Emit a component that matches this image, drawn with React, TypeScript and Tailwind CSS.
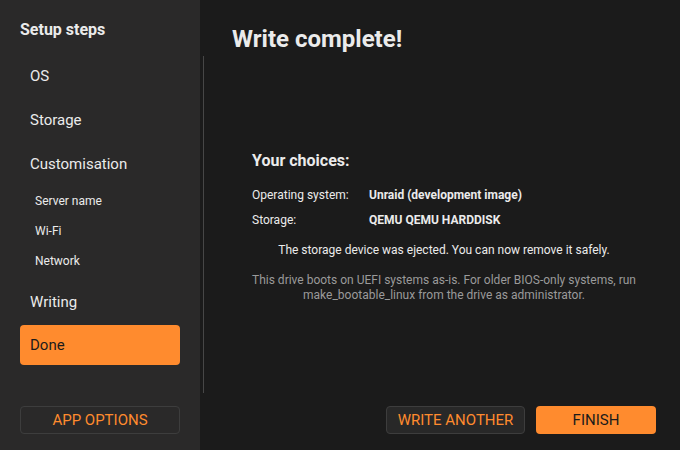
import React from 'react';

const font = { fontFamily: 'Roboto, "Liberation Sans", sans-serif' };

const steps = [
  { label: 'OS', sub: false },
  { label: 'Storage', sub: false },
  { label: 'Customisation', sub: false },
  { label: 'Server name', sub: true },
  { label: 'Wi-Fi', sub: true },
  { label: 'Network', sub: true },
];

export default function App() {
  return (
    <div className="flex w-[680px] h-[450px] bg-[#1b1b1b] text-[#ebebeb] overflow-hidden" style={font}>
      {/* Sidebar */}
      <aside className="w-[200px] shrink-0 bg-[#2a2929] flex flex-col px-5 pt-[20px] pb-4">
        <h2 className="text-[16px] font-bold leading-5">Setup steps</h2>
        <ul className="mt-[14px] flex flex-col">
          {steps.map((s) =>
            s.sub ? (
              <li key={s.label} className="h-[30px] flex items-center pl-[15px] text-[12px]">
                {s.label}
              </li>
            ) : (
              <li key={s.label} className="h-[44px] flex items-center pl-[10px] text-[15px]">
                {s.label}
              </li>
            )
          )}
          <li className="mt-[4px] h-[44px] flex items-center pl-[10px] text-[15px]">Writing</li>
          <li className="mt-[1px] h-[40px] flex items-center pl-[10px] text-[15px] text-[#1b1b1b] bg-[#ff8b2e] rounded">
            Done
          </li>
        </ul>
        <button className="mt-auto h-[28px] w-full rounded border border-[#3d3d3d] text-[#ff8b2e] text-[15px]">
          APP OPTIONS
        </button>
      </aside>

      {/* Main */}
      <main className="flex-1 flex">
        <div className="w-[3px] shrink-0" />
        <div className="w-px shrink-0 mt-[56px] mb-[57px] bg-[#474747]" />
        <div className="flex-1 flex flex-col pl-[28px] pr-6 pt-[25px] pb-4">
          <h1 className="text-[24px] font-bold leading-7">Write complete!</h1>
          <div className="mt-[98px] flex flex-col">
            <div className="pl-5">
              <h3 className="text-[16px] font-bold leading-5">Your choices:</h3>
              <div className="mt-[16px] grid grid-cols-[117px_1fr] gap-y-[9px] text-[12px] leading-4">
                <span>Operating system:</span>
                <span className="font-bold">Unraid (development image)</span>
                <span>Storage:</span>
                <span className="font-bold">QEMU QEMU HARDDISK</span>
              </div>
            </div>
            <p className="mt-[14px] text-center text-[12px] leading-4">
              The storage device was ejected. You can now remove it safely.
            </p>
            <p className="mt-[15px] text-center text-[12px] leading-[15px] text-[#9a9a9a]">
              This drive boots on UEFI systems as-is. For older BIOS-only systems, run
              <br />
              make_bootable_linux from the drive as administrator.
            </p>
          </div>
          <div className="mt-auto flex justify-end gap-[11px]">
            <button className="h-[28px] w-[139px] rounded border border-[#3d3d3d] bg-[#282828] text-[#ff8b2e] text-[15px]">
              WRITE ANOTHER
            </button>
            <button className="h-[28px] w-[120px] rounded bg-[#ff8b2e] text-[#1b1b1b] text-[15px]">
              FINISH
            </button>
          </div>
        </div>
      </main>
    </div>
  );
}
